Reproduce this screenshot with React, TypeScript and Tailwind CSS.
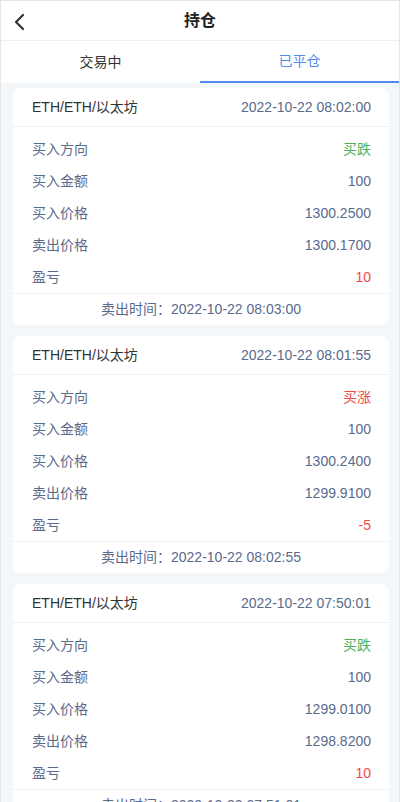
import React from 'react';

type Trade = {
  time: string;
  dir: 'up' | 'down';
  amount: string;
  buyPrice: string;
  sellPrice: string;
  pnl: string;
  sellTime: string;
};

const trades: Trade[] = [
  {
    time: '2022-10-22 08:02:00',
    dir: 'down',
    amount: '100',
    buyPrice: '1300.2500',
    sellPrice: '1300.1700',
    pnl: '10',
    sellTime: '2022-10-22 08:03:00',
  },
  {
    time: '2022-10-22 08:01:55',
    dir: 'up',
    amount: '100',
    buyPrice: '1300.2400',
    sellPrice: '1299.9100',
    pnl: '-5',
    sellTime: '2022-10-22 08:02:55',
  },
  {
    time: '2022-10-22 07:50:01',
    dir: 'down',
    amount: '100',
    buyPrice: '1299.0100',
    sellPrice: '1298.8200',
    pnl: '10',
    sellTime: '2022-10-22 07:51:01',
  },
];

function Row({ label, value, color }: { label: string; value: string; color?: string }) {
  return (
    <div className="flex h-8 items-center justify-between">
      <span className="text-[#5a6a8c]">{label}</span>
      <span className={color ?? 'text-[#5a6a8c]'}>{value}</span>
    </div>
  );
}

function TradeCard({ t }: { t: Trade }) {
  return (
    <div className="overflow-hidden rounded-lg bg-white">
      <div className="flex h-[39px] items-center justify-between border-b border-[#eef0f3] pl-[19px] pr-[18px]">
        <span className="text-[#333]">ETH/ETH/以太坊</span>
        <span className="text-[#5a6a8c]">{t.time}</span>
      </div>
      <div className="pb-0 pl-[19px] pr-[18px] pt-1.5">
        <Row
          label="买入方向"
          value={t.dir === 'up' ? '买涨' : '买跌'}
          color={t.dir === 'up' ? 'text-[#f04848]' : 'text-[#4cb05a]'}
        />
        <Row label="买入金额" value={t.amount} />
        <Row label="买入价格" value={t.buyPrice} />
        <Row label="卖出价格" value={t.sellPrice} />
        <Row label="盈亏" value={t.pnl} color="text-[#f04848]" />
      </div>
      <div className="flex h-8 items-center justify-center border-t border-[#eef0f3] text-[#5a6a8c]">
        卖出时间：{t.sellTime}
      </div>
    </div>
  );
}

export default function App() {
  return (
    <div
      className="min-h-[802px] border-x border-t border-[#e6e6e6] bg-[#f4f7fa] text-[14px]"
      style={{ fontFamily: '"Liberation Sans", "Noto Sans CJK SC", sans-serif' }}
    >
      <div className="relative flex h-10 items-center justify-center border-b border-[#eeeeee] bg-white">
        <svg
          className="absolute left-[12px] top-[12px]"
          width="14"
          height="18"
          viewBox="0 0 14 18"
          fill="none"
          stroke="#333"
          strokeWidth="2.2"
          strokeLinecap="round"
          strokeLinejoin="round"
        >
          <path d="M10 2 L3 9 L10 16" />
        </svg>
        <span className="text-[16px] font-bold text-[#222]">持仓</span>
      </div>
      <div className="flex h-[42px] bg-white">
        <div className="flex flex-1 items-center justify-center text-[#333]">交易中</div>
        <div className="flex flex-1 items-center justify-center border-b-2 border-[#5089f0] text-[#5089f0]">
          已平仓
        </div>
      </div>
      <div className="flex flex-col gap-[11px] pl-3 pr-[10px] pt-[5px]">
        {trades.map((t) => (
          <TradeCard key={t.time} t={t} />
        ))}
      </div>
    </div>
  );
}
